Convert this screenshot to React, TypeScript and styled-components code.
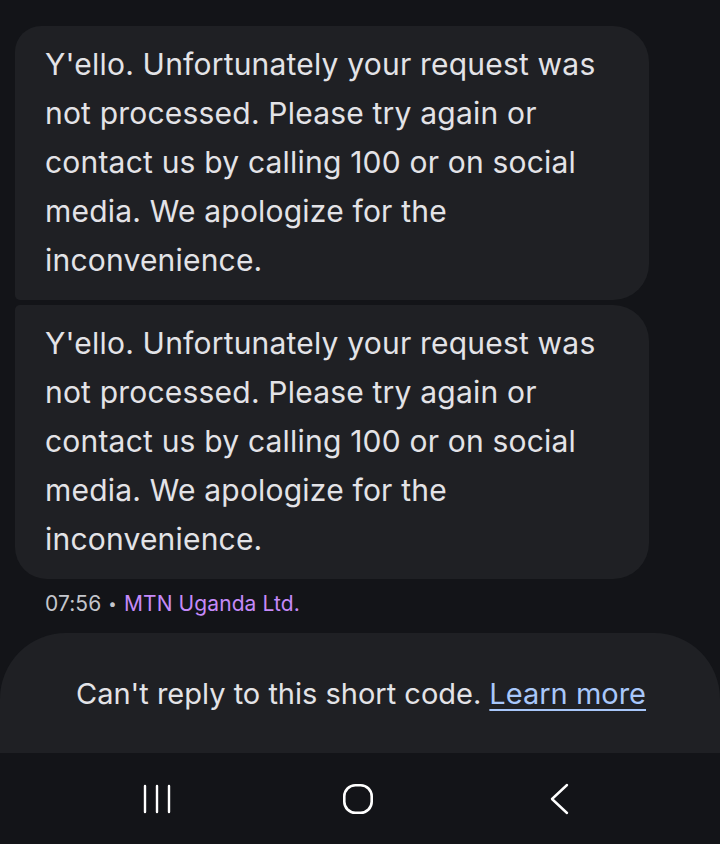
import React from 'react';
import styled, { createGlobalStyle } from 'styled-components';

const GlobalStyle = createGlobalStyle`
  html, body {
    margin: 0;
    padding: 0;
    background: #131418;
  }
  body {
    font-family: Inter, Roboto, "Noto Sans", sans-serif;
    -webkit-font-smoothing: antialiased;
  }
`;

const Screen = styled.div`
  width: 720px;
  height: 844px;
  display: flex;
  flex-direction: column;
  background: #131418;
  overflow: hidden;
`;

const Thread = styled.div`
  flex: 1;
  display: flex;
  flex-direction: column;
  gap: 5px;
  padding: 26px 0 0 15px;
`;

const Bubble = styled.div<{ $first?: boolean; $last?: boolean }>`
  width: 634px;
  box-sizing: border-box;
  padding: 14px 30px 15px;
  background: #1f2024;
  color: #e3e3e7;
  font-size: 30px;
  letter-spacing: 0.2px;
  line-height: 49px;
  border-radius: ${({ $first }) => ($first ? '26px' : '5px')} 36px 36px
    ${({ $last }) => ($last ? '32px' : '5px')};
`;

const Meta = styled.div`
  margin: 8px 0 0 30px;
  font-size: 21px;
  line-height: 24px;
  letter-spacing: 0.1px;
  color: #c4c6cc;
`;

const Dot = styled.span`
  margin: 0 7px;
  font-size: 15px;
  position: relative;
  top: -2px;
`;

const Sender = styled.span`
  color: #c58af9;
`;

const ReplyPanel = styled.div`
  height: 120px;
  flex-shrink: 0;
  display: flex;
  align-items: center;
  justify-content: center;
  background: #1f2024;
  border-radius: 66px 66px 0 0;
  color: #e3e3e7;
  font-size: 29px;
  padding-left: 2px;
`;

const LearnMore = styled.a`
  margin-left: 8px;
  color: #a8c7fa;
  text-decoration: underline;
  text-underline-offset: 5px;
  text-decoration-thickness: 2px;
`;

const NavBar = styled.nav`
  height: 91px;
  flex-shrink: 0;
  display: grid;
  grid-template-columns: repeat(3, 201px);
  justify-content: center;
  align-items: center;
  justify-items: center;
  padding-right: 4px;
  background: #131418;
`;

const NavButton = styled.div`
  width: 40px;
  height: 40px;
  display: flex;
  align-items: center;
  justify-content: center;
  color: #ffffff;
`;

const message =
  "Y'ello. Unfortunately your request was not processed. Please try again or contact us by calling 100 or on social media. We apologize for the inconvenience.";

const RecentsIcon = () => (
  <svg width="30" height="30" viewBox="0 0 30 30" fill="none" stroke="currentColor" strokeWidth="2.4" strokeLinecap="round">
    <path d="M3 2v26M15 2v26M27 2v26" />
  </svg>
);

const HomeIcon = () => (
  <svg width="32" height="32" viewBox="0 0 32 32" fill="none" stroke="currentColor" strokeWidth="2.6">
    <rect x="2.3" y="2.3" width="27.4" height="27.4" rx="11" />
  </svg>
);

const BackIcon = () => (
  <svg width="22" height="32" viewBox="0 0 22 32" fill="none" stroke="currentColor" strokeWidth="2.4" strokeLinecap="round" strokeLinejoin="round">
    <path d="M19 2L4 16l15 14" />
  </svg>
);

const App: React.FC = () => {
  return (
    <>
      <GlobalStyle />
      <Screen>
        <Thread>
          <Bubble $first>{message}</Bubble>
          <Bubble $last>{message}</Bubble>
          <Meta>
            07:56<Dot>•</Dot>
            <Sender>MTN Uganda Ltd.</Sender>
          </Meta>
        </Thread>
        <ReplyPanel>
          Can't reply to this short code.
          <LearnMore href="#">Learn more</LearnMore>
        </ReplyPanel>
        <NavBar>
          <NavButton>
            <RecentsIcon />
          </NavButton>
          <NavButton>
            <HomeIcon />
          </NavButton>
          <NavButton>
            <BackIcon />
          </NavButton>
        </NavBar>
      </Screen>
    </>
  );
};

export default App;
